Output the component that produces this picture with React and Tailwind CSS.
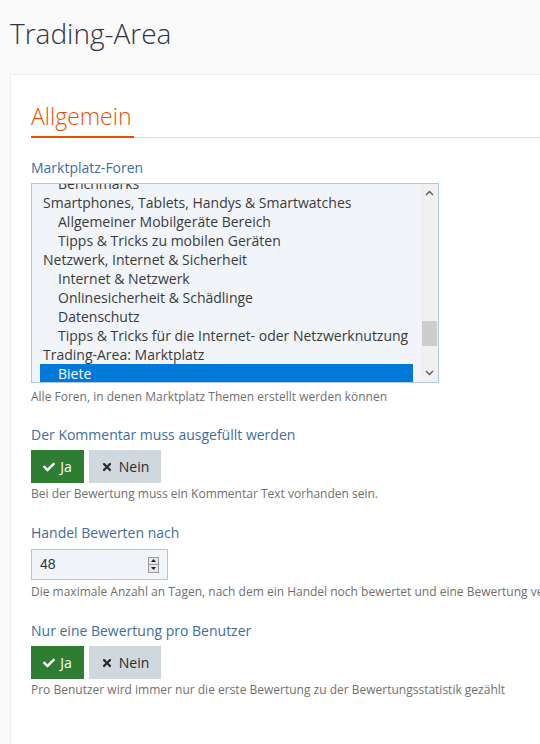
import React from "react";
import { FaCheck, FaTimes } from "react-icons/fa";

const forums = [
  { label: "Benchmarks", depth: 1 },
  { label: "Smartphones, Tablets, Handys & Smartwatches", depth: 0 },
  { label: "Allgemeiner Mobilgeräte Bereich", depth: 1 },
  { label: "Tipps & Tricks zu mobilen Geräten", depth: 1 },
  { label: "Netzwerk, Internet & Sicherheit", depth: 0 },
  { label: "Internet & Netzwerk", depth: 1 },
  { label: "Onlinesicherheit & Schädlinge", depth: 1 },
  { label: "Datenschutz", depth: 1 },
  { label: "Tipps & Tricks für die Internet- oder Netzwerknutzung", depth: 1 },
  { label: "Trading-Area: Marktplatz", depth: 0 },
  { label: "Biete", depth: 1, selected: true },
];

function Label({ children }) {
  return <div className="text-[14px] leading-[20px] text-[#3e6d9c]">{children}</div>;
}

function Help({ children }) {
  return <div className="text-[12px] leading-[16px] text-[#6f6f6f] whitespace-nowrap">{children}</div>;
}

function YesNo() {
  return (
    <div className="flex gap-[5px]">
      <button className="flex h-[33px] w-[53px] items-center justify-center gap-[5px] bg-[#2e7d32] text-[14px] text-white">
        <FaCheck className="h-[12px] w-[12px]" />
        <span>Ja</span>
      </button>
      <button className="flex h-[33px] w-[72px] items-center justify-center gap-[6px] bg-[#cfd8dc] text-[14px] text-[#2b2b2b]">
        <FaTimes className="h-[12px] w-[12px]" />
        <span>Nein</span>
      </button>
    </div>
  );
}

function ForumSelect() {
  return (
    <div className="flex h-[200px] w-[408px] border border-[#adc7de] bg-[#f1f5f9]">
      <div className="flex-1 overflow-hidden pl-[8px] pr-[8px]">
        <div className="-mt-[10px]">
          {forums.map((f) => (
            <div
              key={f.label}
              className={
                "h-[19px] whitespace-nowrap text-[14px] leading-[19px] " +
                (f.selected ? "bg-[#0078d7] text-white" : "text-[#3a3a3a]")
              }
              style={{ paddingLeft: 3 + f.depth * 15 }}
            >
              {f.label}
            </div>
          ))}
        </div>
      </div>
      <div className="relative w-[17px] bg-[#f0f0f0]">
        <svg className="absolute left-[4px] top-[6px]" width="9" height="6" viewBox="0 0 9 6">
          <path d="M1 5 L4.5 1.5 L8 5" fill="none" stroke="#606060" strokeWidth="1.5" />
        </svg>
        <div className="absolute left-[1px] top-[137px] h-[25px] w-[15px] bg-[#cdcdcd]" />
        <svg className="absolute bottom-[6px] left-[4px]" width="9" height="6" viewBox="0 0 9 6">
          <path d="M1 1 L4.5 4.5 L8 1" fill="none" stroke="#606060" strokeWidth="1.5" />
        </svg>
      </div>
    </div>
  );
}

function NumberInput() {
  return (
    <div className="flex h-[31px] w-[137px] items-center justify-between border border-[#adc7de] bg-[#f1f5f9] pl-[8px] pr-[8px]">
      <span className="text-[14px] text-[#333]" style={{ fontFamily: "Arial, 'Liberation Sans', sans-serif" }}>48</span>
      <div className="flex h-[16px] w-[11px] flex-col border border-[#9a9a9a] bg-[#e8e8e8]">
        <div className="flex flex-1 items-center justify-center border-b border-[#9a9a9a]">
          <svg width="5" height="3" viewBox="0 0 5 3"><path d="M0 3 L2.5 0 L5 3Z" fill="#222" /></svg>
        </div>
        <div className="flex flex-1 items-center justify-center">
          <svg width="5" height="3" viewBox="0 0 5 3"><path d="M0 0 L2.5 3 L5 0Z" fill="#222" /></svg>
        </div>
      </div>
    </div>
  );
}

export default function App() {
  return (
    <div
      className="h-[744px] w-[540px] overflow-hidden bg-[#fafafa]"
      style={{ fontFamily: "'Open Sans', sans-serif" }}
    >
      <h1 className="pl-[10px] pt-[14px] text-[28px] font-light leading-[38px] text-[#2d3540]">Trading-Area</h1>
      <div className="ml-[10px] mt-[22px] h-[700px] w-[640px] border border-[#ebedf0] bg-white pl-[20px] pt-[26px]">
        <div className="flex border-b border-[#dcdcdc]">
          <h2 className="-mb-[1px] border-b-2 border-[#e65100] pb-[4px] pr-[2px] text-[23px] font-light leading-[31px] text-[#e65100]">
            Allgemein
          </h2>
        </div>

        <div className="mt-[20px] flex flex-col">
          <Label>Marktplatz-Foren</Label>
          <div className="mt-[5px]">
            <ForumSelect />
          </div>
          <div className="mt-[6px]">
            <Help>Alle Foren, in denen Marktplatz Themen erstellt werden können</Help>
          </div>
        </div>

        <div className="mt-[20px] flex flex-col">
          <Label>Der Kommentar muss ausgefüllt werden</Label>
          <div className="mt-[5px]">
            <YesNo />
          </div>
          <div className="mt-[3px]">
            <Help>Bei der Bewertung muss ein Kommentar Text vorhanden sein.</Help>
          </div>
        </div>

        <div className="mt-[21px] flex flex-col">
          <Label>Handel Bewerten nach</Label>
          <div className="mt-[6px]">
            <NumberInput />
          </div>
          <div className="mt-[4px]">
            <Help>Die maximale Anzahl an Tagen, nach dem ein Handel noch bewertet und eine Bewertung verändert werden kann</Help>
          </div>
        </div>

        <div className="mt-[21px] flex flex-col">
          <Label>Nur eine Bewertung pro Benutzer</Label>
          <div className="mt-[5px]">
            <YesNo />
          </div>
          <div className="mt-[3px]">
            <Help>Pro Benutzer wird immer nur die erste Bewertung zu der Bewertungsstatistik gezählt</Help>
          </div>
        </div>
      </div>
    </div>
  );
}
